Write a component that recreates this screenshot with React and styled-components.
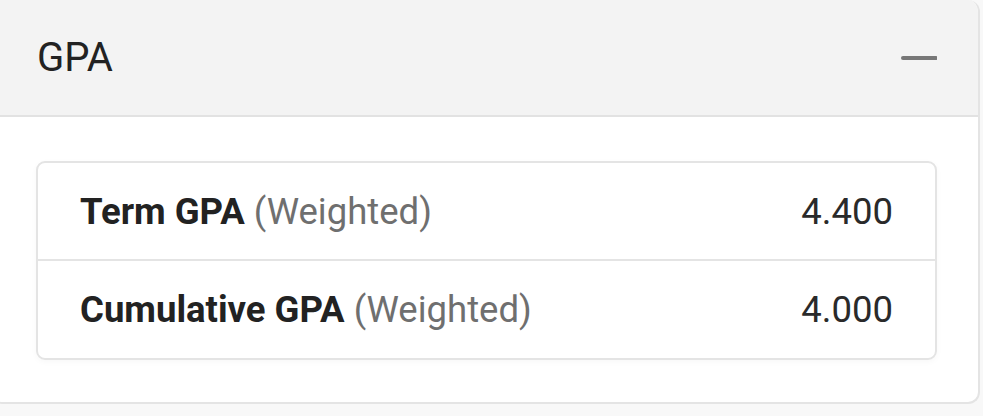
import React from "react";
import styled, { createGlobalStyle } from "styled-components";

const Global = createGlobalStyle`
  html, body { margin: 0; padding: 0; background: #f8f8f8; }
  body { font-family: Roboto, "Noto Sans", "Liberation Sans", sans-serif; overflow: hidden; }
`;

const Page = styled.div`
  padding: 0 3px 12px 0;
  margin-left: -10px;
`;

const Panel = styled.section`
  background: #fff;
  border: 2px solid #e4e4e4;
  border-top: none;
  border-radius: 0 12px 12px 12px;
  overflow: hidden;
`;

const Header = styled.div`
  display: flex;
  align-items: center;
  justify-content: space-between;
  height: 115px;
  padding: 0 41px 0 45px;
  background: #f3f3f3;
  border-bottom: 2px solid #e2e2e2;
`;

const Title = styled.h2`
  margin: 0;
  font-size: 40px;
  font-weight: 400;
  color: #222;
`;

const Toggle = styled.button`
  border: none;
  background: transparent;
  padding: 0;
  width: 36px;
  height: 36px;
  display: flex;
  align-items: center;
  justify-content: center;
  cursor: pointer;
`;

const Body = styled.div`
  padding: 44px 41px 42px 44px;
`;

const Card = styled.div`
  border: 2px solid #e4e4e4;
  border-radius: 9px;
  box-shadow: 0 2px 6px rgba(0, 0, 0, 0.03);
`;

const Row = styled.div`
  display: flex;
  align-items: center;
  justify-content: space-between;
  height: ${(p) => p.$h}px;
  padding: 0 42px 0 42px;
  border-top: ${(p) => (p.$first ? "none" : "2px solid #e4e4e4")};
  font-size: 36.5px;
`;

const Label = styled.div`
  color: #222;
  font-weight: 700;
`;

const Note = styled.span`
  color: #6f6f6f;
  font-weight: 400;
`;

const Value = styled.div`
  color: #2a2a2a;
`;

const rows = [
  { label: "Term GPA", value: "4.400" },
  { label: "Cumulative GPA", value: "4.000" },
];

export default function App() {
  return (
    <>
      <Global />
      <Page>
        <Panel>
          <Header>
            <Title>GPA</Title>
            <Toggle aria-label="Collapse">
              <svg width="36" height="6" viewBox="0 0 36 6">
                <line x1="2" y1="3" x2="35" y2="3" stroke="#777" strokeWidth="4" strokeLinecap="round" />
              </svg>
            </Toggle>
          </Header>
          <Body>
            <Card>
              {rows.map((r, i) => (
                <Row key={r.label} $first={i === 0} $h={i === 0 ? 96 : 97}>
                  <Label>
                    {r.label} <Note>(Weighted)</Note>
                  </Label>
                  <Value>{r.value}</Value>
                </Row>
              ))}
            </Card>
          </Body>
        </Panel>
      </Page>
    </>
  );
}
